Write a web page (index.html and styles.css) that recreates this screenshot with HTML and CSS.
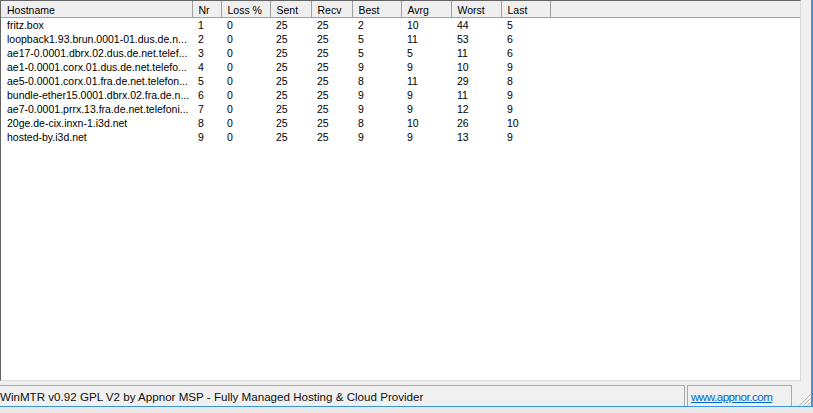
FILE: index.html
```html
<!DOCTYPE html>
<html>
<head>
<meta charset="utf-8">
<title>WinMTR</title>
<link rel="stylesheet" href="styles.css">
</head>
<body>
<div class="frame">
  <div class="list">
    <table class="grid">
      <colgroup>
        <col class="c-host"><col class="c-nr"><col class="c-loss"><col class="c-sent"><col class="c-recv"><col class="c-best"><col class="c-avrg"><col class="c-worst"><col class="c-last"><col>
      </colgroup>
      <thead>
        <tr><th>Hostname</th><th>Nr</th><th>Loss %</th><th>Sent</th><th>Recv</th><th>Best</th><th>Avrg</th><th>Worst</th><th>Last</th><th class="filler"></th></tr>
      </thead>
      <tbody>
        <tr><td>fritz.box</td><td>1</td><td>0</td><td>25</td><td>25</td><td>2</td><td>10</td><td>44</td><td>5</td><td></td></tr>
        <tr><td>loopback1.93.brun.0001-01.dus.de.n...</td><td>2</td><td>0</td><td>25</td><td>25</td><td>5</td><td>11</td><td>53</td><td>6</td><td></td></tr>
        <tr><td>ae17-0.0001.dbrx.02.dus.de.net.telef...</td><td>3</td><td>0</td><td>25</td><td>25</td><td>5</td><td>5</td><td>11</td><td>6</td><td></td></tr>
        <tr><td>ae1-0.0001.corx.01.dus.de.net.telefo...</td><td>4</td><td>0</td><td>25</td><td>25</td><td>9</td><td>9</td><td>10</td><td>9</td><td></td></tr>
        <tr><td>ae5-0.0001.corx.01.fra.de.net.telefon...</td><td>5</td><td>0</td><td>25</td><td>25</td><td>8</td><td>11</td><td>29</td><td>8</td><td></td></tr>
        <tr><td>bundle-ether15.0001.dbrx.02.fra.de.n...</td><td>6</td><td>0</td><td>25</td><td>25</td><td>9</td><td>9</td><td>11</td><td>9</td><td></td></tr>
        <tr><td>ae7-0.0001.prrx.13.fra.de.net.telefoni...</td><td>7</td><td>0</td><td>25</td><td>25</td><td>9</td><td>9</td><td>12</td><td>9</td><td></td></tr>
        <tr><td>20ge.de-cix.inxn-1.i3d.net</td><td>8</td><td>0</td><td>25</td><td>25</td><td>8</td><td>10</td><td>26</td><td>10</td><td></td></tr>
        <tr><td>hosted-by.i3d.net</td><td>9</td><td>0</td><td>25</td><td>25</td><td>9</td><td>9</td><td>13</td><td>9</td><td></td></tr>
      </tbody>
    </table>
  </div>
  <div class="status">
    <div class="panel panel-main"><span class="status-text">WinMTR v0.92 GPL V2 by Appnor MSP - Fully Managed Hosting &amp; Cloud Provider</span></div>
    <div class="panel panel-link"><a class="link" href="#">www.appnor.com</a></div>
    <div class="grip">
      <svg width="13" height="13" viewBox="0 0 13 13">
        <g stroke="#a8a8a8" stroke-width="1">
          <line x1="12.5" y1="1.5" x2="1.5" y2="12.5"/>
          <line x1="12.5" y1="5.5" x2="5.5" y2="12.5"/>
          <line x1="12.5" y1="9.5" x2="9.5" y2="12.5"/>
        </g>
        <g stroke="#ffffff" stroke-width="1">
          <line x1="12.5" y1="2.5" x2="2.5" y2="12.5"/>
          <line x1="12.5" y1="6.5" x2="6.5" y2="12.5"/>
          <line x1="12.5" y1="10.5" x2="10.5" y2="12.5"/>
        </g>
      </svg>
    </div>
  </div>
</div>
</body>
</html>
```
FILE: styles.css
```css
html, body {
  margin: 0;
  padding: 0;
}
body {
  width: 813px;
  height: 413px;
  overflow: hidden;
  background: #e9e9e9;
  font-family: "Liberation Sans", Arial, sans-serif;
}
.frame {
  width: 811px;
  height: 406px;
  border-right: 2px solid #3c95dc;
  border-bottom: 1px solid #3c95dc;
  background: #f0f0f0;
  display: flex;
  flex-direction: column;
}
.list {
  box-sizing: border-box;
  width: 801px;
  height: 381px;
  border-top: 1px solid #646464;
  border-left: 1px solid #646464;
  border-right: 1px solid #dadada;
  border-bottom: 1px solid #dadada;
  background: #ffffff;
  overflow: hidden;
}
.grid {
  table-layout: fixed;
  border-collapse: collapse;
  width: 799px;
  font-size: 10.5px;
  color: #000;
}
.c-host { width: 191px; }
.c-nr { width: 29px; }
.c-loss { width: 49px; }
.c-sent { width: 41px; }
.c-recv { width: 41px; }
.c-best { width: 49px; }
.c-avrg { width: 50px; }
.c-worst { width: 50px; }
.c-last { width: 49px; }
.grid th {
  box-sizing: border-box;
  height: 16px;
  padding: 2px 0 0 6px;
  background: #efefef;
  border-right: 1px solid #a0a0a0;
  border-bottom: 1px solid #a0a0a0;
  font-weight: normal;
  text-align: left;
  white-space: nowrap;
  overflow: hidden;
}
.grid th.filler {
  border-right: none;
}
.grid td {
  height: 14px;
  padding: 0 0 0 6px;
  line-height: 14px;
  white-space: nowrap;
  overflow: hidden;
}
.status {
  margin-top: 4px;
  height: 21px;
  display: flex;
  font-size: 11.6px;
  color: #111;
}
.panel {
  box-sizing: border-box;
  height: 21px;
  border-top: 1px solid #a9a9a9;
  display: flex;
  align-items: center;
  white-space: nowrap;
  overflow: hidden;
}
.panel-main {
  width: 685px;
  border-right: 1px solid #a9a9a9;
}
.panel-link {
  width: 105px;
  margin-left: 2px;
  border-left: 1px solid #a9a9a9;
  border-right: 1px solid #a9a9a9;
  padding-left: 3px;
}
.link {
  color: #0066cc;
  text-decoration: underline;
  letter-spacing: -0.5px;
}
.grip {
  width: 19px;
  height: 21px;
  display: flex;
  align-items: flex-end;
  justify-content: flex-end;
}
.grip svg {
  display: block;
}
```
